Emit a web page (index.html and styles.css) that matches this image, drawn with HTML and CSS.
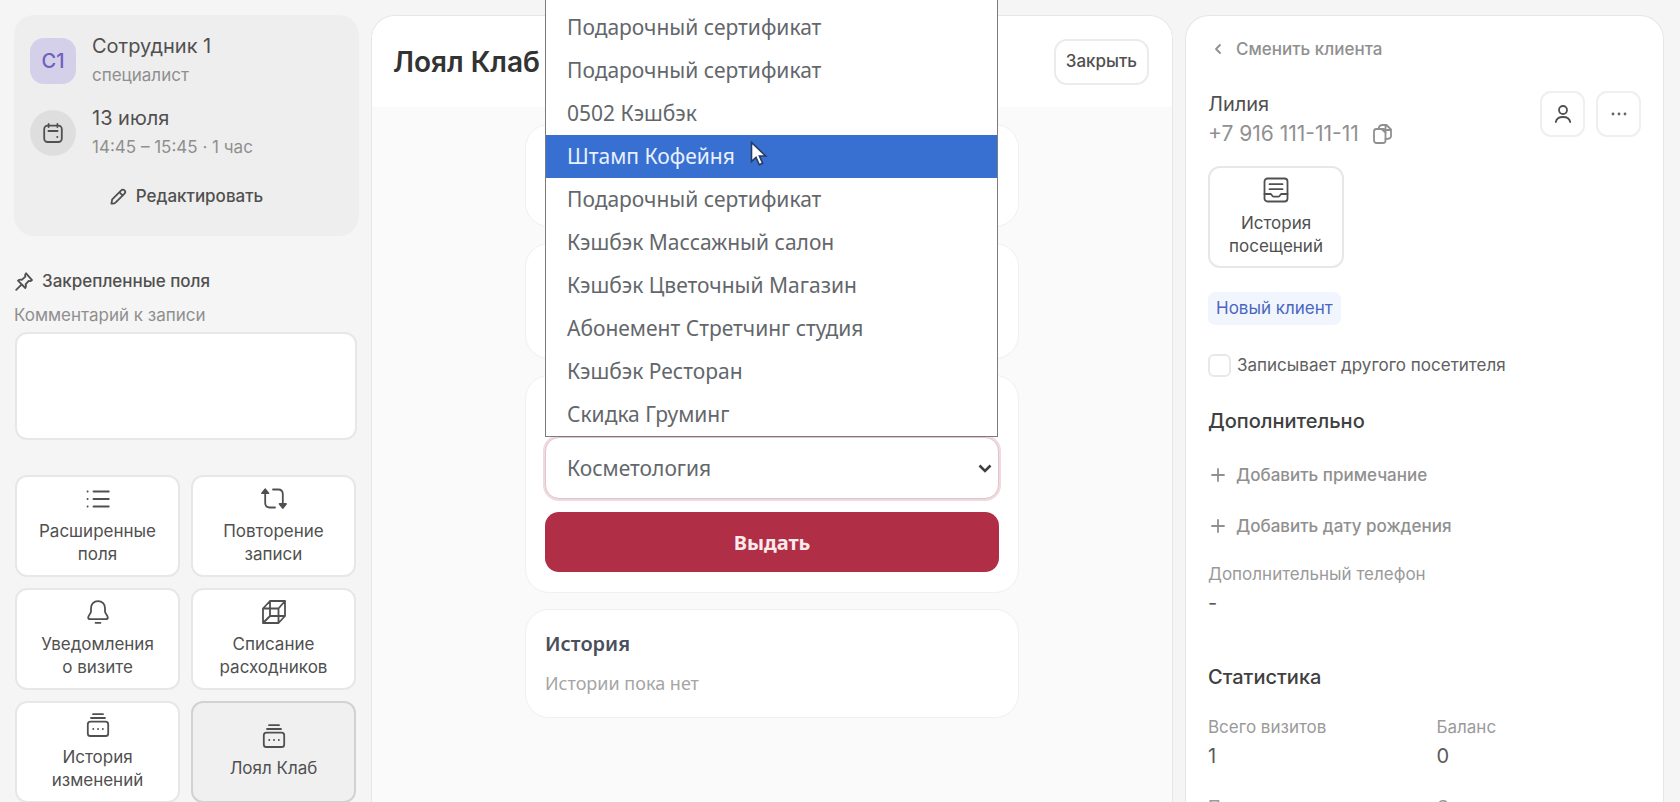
FILE: index.html
```html
<!DOCTYPE html>
<html lang="ru">
<head>
<meta charset="utf-8">
<title>Лоял Клаб</title>
<link rel="stylesheet" href="styles.css">
</head>
<body>
<svg class="defs" aria-hidden="true">
  <symbol id="i-stack" viewBox="0 0 24 24"><path d="M7 1.2h10M5 5h14"/><rect x="1.8" y="8.6" width="20.4" height="14.4" rx="2.6"/><path d="M7.2 16h.1M12 16h.1M16.8 16h.1"/></symbol>
  <symbol id="i-plus" viewBox="0 0 14 14"><path d="M7 1v12M1 7h12"/></symbol>
</svg>
<div class="layout">
  <aside class="sidebar">
    <section class="visit">
      <div class="visit-row">
        <span class="avatar">С1</span>
        <div><p class="primary">Сотрудник 1</p><p class="secondary">специалист</p></div>
      </div>
      <div class="visit-row">
        <span class="date-icon">
          <svg class="icon" width="20" height="20" viewBox="0 0 20 20"><rect x="1.2" y="2.6" width="17.6" height="16.4" rx="3.4"/><path d="M5.6 1v3M14.4 1v3M5.4 8h9.2M14.2 14h.2"/></svg>
        </span>
        <div><p class="primary">13 июля</p><p class="secondary">14:45 – 15:45 · 1 час</p></div>
      </div>
      <button class="edit" type="button">
        <svg class="icon" width="17" height="17" viewBox="0 0 17 17"><path d="M1.400 15.600l.8-4.200 8.800-8.800c1.200-1.200 2.500-1.200 3.500-.2s1 2.300-.2 3.500l-8.800 8.800c-1 .9-2.600 1.100-4.100.9zM9.800 4.600l2.800 2.800"/></svg>
        Редактировать
      </button>
    </section>
    <h2 class="pinned">
      <svg class="icon" width="19" height="19" viewBox="0 0 19 19"><path d="M1.200 17.800l5-5M3 8.700l7.300 7.300c.6-.8.800-2.400.3-3.700l3.100-3.500c1.200.5 2.400.2 3.300-.7L11.100 1.300c-.9.900-1.200 2.100-.7 3.300L6.800 7.900C5.500 7.500 4 7.800 3 8.700z"/></svg>
      Закрепленные поля
    </h2>
    <label class="comment-label" for="comment">Комментарий к записи</label>
    <textarea class="comment" id="comment"></textarea>
    <div class="tiles">
      <button class="tile" type="button">
        <svg class="icon" width="24" height="24" viewBox="0 0 24 24"><path d="M1.500 4.500h.2M1.500 12h.2M1.500 19.500h.2M7.500 4.500h15.300M7.500 12h15.300M7.500 19.500h15.300"/></svg>
        <span>Расширенные<br>поля</span>
      </button>
      <button class="tile" type="button">
        <svg class="icon" width="26" height="24" viewBox="0 0 26 24"><path d="M4.200 5v11c0 3 1.500 4.500 4.500 4.500H14M21.800 18V7c0-3-1.500-4.500-4.500-4.500H12"/><path class="solid" d="M1 6.200l3.200-4 3.200 4zM18.600 17l3.200 4 3.200-4z"/></svg>
        <span>Повторение<br>записи</span>
      </button>
      <button class="tile" type="button">
        <svg class="icon" width="24" height="24" viewBox="0 0 24 24"><path d="M12 1.200c-4.300 0-7 3.100-7 7v3.300c0 2-2.800 4-2.800 6 0 1.100.8 1.700 2 1.700h15.600c1.200 0 2-.6 2-1.700 0-2-2.800-4-2.800-6V8.200c0-3.900-2.700-7-7-7zM9.500 22.800h5"/></svg>
        <span>Уведомления<br>о визите</span>
      </button>
      <button class="tile" type="button">
        <svg class="icon" width="24" height="24" viewBox="0 0 24 24"><path d="M1 8.500L8 1h15v15l-6.500 7H1zM1 8.500h15.500V23M16.500 8.500L23 1M8 1v15M8 16h15M8 16l-7 7"/></svg>
        <span>Списание<br>расходников</span>
      </button>
      <button class="tile" type="button">
        <svg class="icon" width="24" height="24"><use href="#i-stack"/></svg>
        <span>История<br>изменений</span>
      </button>
      <button class="tile tile-active" type="button">
        <svg class="icon" width="24" height="24"><use href="#i-stack"/></svg>
        <span>Лоял Клаб</span>
      </button>
    </div>
  </aside>

  <main class="panel">
    <header class="panel-head">
      <h1>Лоял Клаб</h1>
      <button class="close" type="button">Закрыть</button>
    </header>
    <div class="panel-body">
      <section class="card card-short"></section>
      <section class="card card-tall"></section>
      <section class="card card-issue">
        <div class="picker">
          <select class="select" aria-label="Карта"><option>Косметология</option></select>
          <svg class="chevron" width="14" height="9" viewBox="0 0 14 9"><path d="M1.500 1.500L7 7l5.500-5.500"/></svg>
          <ul class="options" role="listbox">
            <li role="option">Подарочный сертификат</li>
            <li role="option">Подарочный сертификат</li>
            <li role="option">0502 Кэшбэк</li>
            <li role="option" class="current" aria-selected="true">Штамп Кофейня
              <svg class="cursor" width="18" height="26" viewBox="0 0 18 26"><path d="M1.500 1.500v19l4.500-4.200 3.300 7.500 3.300-1.500-3.200-7.300h6.300z"/></svg>
            </li>
            <li role="option">Подарочный сертификат</li>
            <li role="option">Кэшбэк Массажный салон</li>
            <li role="option">Кэшбэк Цветочный Магазин</li>
            <li role="option">Абонемент Стретчинг студия</li>
            <li role="option">Кэшбэк Ресторан</li>
            <li role="option">Скидка Груминг</li>
          </ul>
        </div>
        <button class="issue" type="button">Выдать</button>
      </section>
      <section class="card card-history">
        <h2>История</h2>
        <p>Истории пока нет</p>
      </section>
    </div>
  </main>

  <aside class="client">
    <button class="link back" type="button">
      <svg class="icon" width="20" height="12" viewBox="0 0 20 12"><path d="M12 2L8 6l4 4"/></svg>
      Сменить клиента
    </button>
    <div class="client-head">
      <div>
        <p class="primary">Лилия</p>
        <p class="phone">+7 916 111-11-11
          <svg class="icon" width="19" height="20" viewBox="0 0 19 20"><rect x="1" y="5" width="11.500" height="14" rx="2.500"/><path d="M5.500 5c.3-2.500 1.500-4 4-4h4L18 5.500V12c0 2-1.500 3-5.500 3M8.500 5l4 3.500M12.500 1.500v4.500H18"/></svg>
        </p>
      </div>
      <div class="client-actions">
        <button class="square" type="button" aria-label="Профиль"><svg class="icon" width="18" height="18" viewBox="0 0 18 18"><circle cx="9" cy="5" r="4"/><path d="M1.800 17c.6-3.300 3.200-5 7.200-5s6.600 1.700 7.200 5"/></svg></button>
        <button class="square" type="button" aria-label="Ещё"><svg class="dots" width="16" height="4" viewBox="0 0 16 4"><circle cx="2" cy="2" r="1.400"/><circle cx="8" cy="2" r="1.400"/><circle cx="14" cy="2" r="1.400"/></svg></button>
      </div>
    </div>
    <button class="tile visits" type="button">
      <svg class="icon" width="26" height="26" viewBox="0 0 26 26"><rect x="1.500" y="1.500" width="23" height="23" rx="3"/><path d="M6.500 7.200h13M6.500 12.200h13M1.500 17h6.200c1 0 1.300 2.600 2.800 2.600h5c1.500 0 1.800-2.600 2.800-2.600h6.200"/></svg>
      <span>История<br>посещений</span>
    </button>
    <span class="badge">Новый клиент</span>
    <label class="check"><input type="checkbox">Записывает другого посетителя</label>
    <h2 class="section-title extra">Дополнительно</h2>
    <button class="link note" type="button"><svg class="icon" width="20" height="14"><use href="#i-plus"/></svg>Добавить примечание</button>
    <button class="link birth" type="button"><svg class="icon" width="20" height="14"><use href="#i-plus"/></svg>Добавить дату рождения</button>
    <dl class="phone-extra"><dt>Дополнительный телефон</dt><dd>-</dd></dl>
    <h2 class="section-title stats-title">Статистика</h2>
    <dl class="stats">
      <div><dt>Всего визитов</dt><dd>1</dd></div>
      <div><dt>Баланс</dt><dd>0</dd></div>
      <div><dt>Потрачено</dt></div>
      <div><dt>Скидка</dt></div>
    </dl>
  </aside>
</div>
</body>
</html>
```
FILE: styles.css
```css
* { box-sizing: border-box; margin: 0; padding: 0; }
body {
  height: 100vh;
  overflow: hidden;
  background: #f5f5f5;
  color: #505050;
  font: 17px/23px Inter, "Liberation Sans", sans-serif;
}
button, select, textarea, input { font: inherit; color: inherit; }
button { cursor: pointer; }
.defs { display: none; }
.icon { flex: none; fill: none; stroke: currentColor; stroke-width: 1.8; stroke-linecap: round; stroke-linejoin: round; }
.icon .solid { fill: currentColor; }

.layout {
  display: grid;
  grid-template-columns: 345px minmax(0, 1fr) 479px;
  gap: 12px;
  height: 100%;
  padding: 15px 16px 0 14px;
}
.primary { font-size: 20px; line-height: 29px; color: #505050; }
.secondary { line-height: 29px; color: #8f8f8f; }

/* Sidebar */
.sidebar { min-width: 0; }
.visit { display: flex; flex-direction: column; gap: 14px; padding: 17px 16px 20px; border-radius: 20px; background: #eeeeee; }
.visit-row { display: flex; align-items: center; gap: 16px; }
.avatar, .date-icon { display: grid; place-items: center; flex: none; width: 46px; height: 46px; }
.avatar { border-radius: 14px; background: #d5d0ea; color: #6f60bd; font-size: 20px; font-weight: 500; }
.date-icon { border-radius: 50%; background: #dedede; }
.edit { display: flex; align-items: center; justify-content: center; gap: 9px; height: 40px; border: 0; background: none; font-weight: 500; }
.pinned { display: flex; align-items: center; gap: 8px; margin-top: 30px; padding-left: 1px; font-size: 17px; font-weight: 500; line-height: 30px; }
.comment-label { display: block; margin-top: 4px; line-height: 30px; color: #8f8f8f; }
.comment { display: block; width: 342px; height: 108px; margin: 2px 0 35px 1px; padding: 12px; border: 2px solid #e7e7e7; border-radius: 12px; background: #fff; resize: none; }
.tiles { display: grid; grid-template-columns: 1fr 1fr; grid-auto-rows: 102px; gap: 11px; padding: 0 3px 0 1px; }
.tile { display: flex; flex-direction: column; align-items: center; justify-content: center; gap: 9px; border: 2px solid #e7e7e7; border-radius: 12px; background: #fff; text-align: center; }
.tile-active { border-color: #d2d2d2; background: #f0f0f0; }

/* Loyalty panel */
.panel { display: flex; flex-direction: column; border: 1px solid #e6e6e6; border-bottom: 0; border-radius: 24px 24px 0 0; background: #fafafa; }
.panel-head { display: flex; align-items: center; justify-content: space-between; height: 91px; padding: 0 23px 0 21px; border-radius: 23px 23px 0 0; background: #fff; }
.panel-head h1 { font-size: 28px; line-height: 34px; font-weight: 600; color: #333; }
.close { height: 46px; padding: 0 10px; border: 2px solid #ebebeb; border-radius: 13px; background: #fff; font-weight: 500; }
.panel-body { display: flex; flex-direction: column; align-items: center; gap: 16px; padding: 17px 20px 0; font-family: "Noto Sans", "Open Sans", sans-serif; }
.card { width: 100%; max-width: 494px; padding: 18px 19px 20px; border: 1px solid #f0f0f0; border-radius: 24px; background: #fff; }
.card-short { min-height: 103px; }
.card-tall { min-height: 116px; }
.card-issue { display: flex; flex-direction: column; justify-content: flex-end; gap: 13px; min-height: 218px; }
.picker { position: relative; }
.select { display: block; width: 100%; height: 62px; padding: 0 21px; border: 1px solid #e3c3cb; border-radius: 14px; outline: 0; box-shadow: 0 0 0 2px #efdade; appearance: none; background: #fff; font-size: 21px; color: #63676b; }
.chevron { position: absolute; right: 7px; top: 27px; fill: none; stroke: #404040; stroke-width: 2.6; }
.options { position: absolute; left: 0; right: 1px; bottom: 100%; display: flex; flex-direction: column; height: 438px; padding-top: 7px; border: solid #7c7c7c; border-width: 0 1px 1px; background: #fff; color: #63676b; font-size: 21px; list-style: none; }
.options li { display: flex; flex: 1; align-items: center; padding-left: 21px; }
.options .current { position: relative; background: #3870d2; color: #e8f1ff; }
.cursor { position: absolute; left: 204px; top: 6px; fill: #fff; stroke: #263a66; stroke-width: 1.6; }
.issue { height: 60px; border: 0; border-radius: 14px; background: #b02e46; color: #fbe9ec; font-size: 20px; font-weight: 700; }
.card-history h2 { font-size: 20px; font-weight: 600; line-height: 32px; color: #4b4f5c; }
.card-history p { margin-top: 9px; font-size: 18px; line-height: 28px; color: #a5a5a5; }

/* Client */
.client { display: flex; flex-direction: column; align-items: flex-start; padding: 18px 22px 0 22px; border: 1px solid #e6e6e6; border-bottom: 0; border-radius: 24px 24px 0 0; background: #fff; }
.link { display: flex; align-items: center; gap: 8px; border: 0; background: none; line-height: 28px; font-weight: 500; color: #909090; }
.back { line-height: 30px; }
.client-head { display: flex; justify-content: space-between; align-items: center; width: 100%; margin-top: 25px; }
.client-head .primary, .phone { line-height: 30px; }
.phone { display: flex; align-items: center; gap: 14px; font-size: 21px; color: #909090; }
.client-actions { display: flex; gap: 11px; padding-bottom: 10px; }
.square { display: grid; place-items: center; width: 45px; height: 46px; border: 2px solid #efefef; border-radius: 11px; background: #fff; }
.dots { fill: #666; }
.visits { width: 136px; height: 102px; margin-top: 17px; }
.badge { margin-top: 24px; padding: 5px 8px; border-radius: 7px; background: #f1f6fe; color: #4a66c0; }
.check { display: flex; align-items: center; gap: 6px; height: 24px; margin-top: 28px; color: #606060; }
.check input { width: 23px; height: 23px; appearance: none; border: 2px solid #e8e8e8; border-radius: 6px; background: #fff; }
.section-title { font-size: 20px; line-height: 28px; font-weight: 500; color: #404040; }
.extra { margin-top: 30px; }
.note { margin-top: 26px; }
.birth { margin-top: 23px; }
.phone-extra { margin-top: 20px; }
dt { line-height: 29px; color: #9a9a9a; }
dd { font-size: 20px; line-height: 29px; color: #5a5a5a; }
.stats-title { margin-top: 45px; }
.stats { display: grid; grid-template-columns: 1fr 1fr; gap: 22px 24px; width: 100%; margin-top: 22px; }
```
